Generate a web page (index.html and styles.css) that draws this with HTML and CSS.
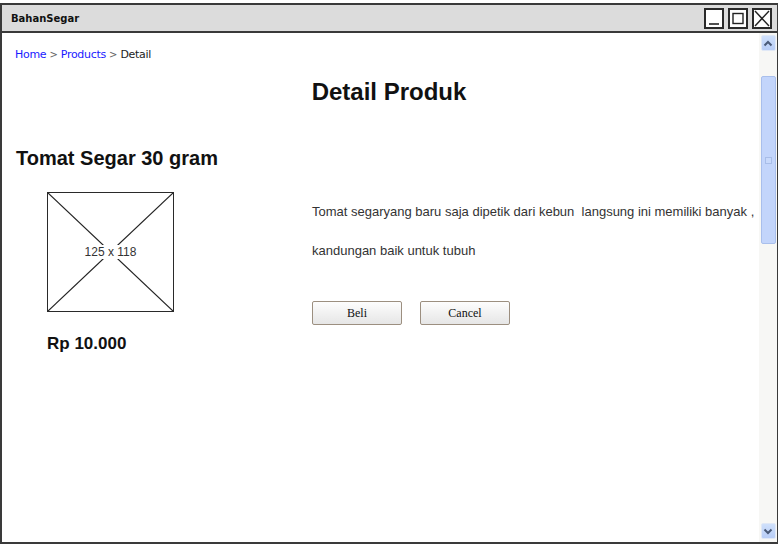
FILE: index.html
```html
<!DOCTYPE html>
<html>
<head>
<meta charset="utf-8">
<link rel="stylesheet" href="styles.css">
</head>
<body>
<div class="window">
  <div class="titlebar">
    <span class="title">BahanSegar</span>
    <div class="controls">
      <span class="ctl"><svg width="16" height="17" viewBox="0 0 16 17"><line x1="3" y1="14" x2="13" y2="14" stroke="#222" stroke-width="1.6"/></svg></span>
      <span class="ctl"><svg width="16" height="17" viewBox="0 0 16 17"><rect x="3" y="3.5" width="10" height="10" fill="none" stroke="#222" stroke-width="1.4"/></svg></span>
      <span class="ctl"><svg width="16" height="17" viewBox="0 0 16 17"><line x1="1" y1="1" x2="15" y2="16" stroke="#222" stroke-width="1.4"/><line x1="15" y1="1" x2="1" y2="16" stroke="#222" stroke-width="1.4"/></svg></span>
    </div>
  </div>
  <div class="body">
    <div class="content">
      <nav class="crumbs"><a>Home</a> <span class="sep">&gt;</span> <a>Products</a> <span class="sep">&gt;</span> <span class="cur">Detail</span></nav>
      <h1 class="page-title">Detail Produk</h1>
      <h2 class="product-name">Tomat Segar 30 gram</h2>
      <div class="detail">
        <div class="left">
          <div class="placeholder">
            <svg class="cross" width="125" height="118" viewBox="0 0 125 118" preserveAspectRatio="none"><line x1="0" y1="0" x2="125" y2="118" stroke="#222" stroke-width="1.2"/><line x1="125" y1="0" x2="0" y2="118" stroke="#222" stroke-width="1.2"/></svg>
            <span class="dim">125 x 118</span>
          </div>
          <div class="price">Rp 10.000</div>
        </div>
        <div class="right">
          <p class="desc">Tomat segaryang baru saja dipetik dari kebun&nbsp; langsung ini memiliki banyak ,</p>
          <p class="desc">kandungan baik untuk tubuh</p>
          <div class="buttons">
            <button class="btn">Beli</button>
            <button class="btn">Cancel</button>
          </div>
        </div>
      </div>
    </div>
    <div class="scrollbar">
      <div class="sb-btn"><svg width="10" height="7" viewBox="0 0 10 7"><polyline points="1.5,5.5 5,2 8.5,5.5" fill="none" stroke="#4a5a78" stroke-width="2"/></svg></div>
      <div class="sb-track">
        <div class="sb-thumb"><span class="grip"></span></div>
      </div>
      <div class="sb-btn"><svg width="10" height="7" viewBox="0 0 10 7"><polyline points="1.5,1.5 5,5 8.5,1.5" fill="none" stroke="#4a5a78" stroke-width="2"/></svg></div>
    </div>
  </div>
</div>
</body>
</html>
```
FILE: styles.css
```css
* { box-sizing: border-box; }
html, body { margin: 0; padding: 0; background: #fff; }
body { width: 778px; height: 545px; overflow: hidden; }

.window {
  margin-top: 3px;
  width: 778px;
  height: 541px;
  border: 2px solid #3a3a3a;
  border-right-width: 1px;
  display: flex;
  flex-direction: column;
  background: #fff;
}

.titlebar {
  height: 28px;
  flex: none;
  background: #dcdcdc;
  border-bottom: 2px solid #3a3a3a;
  display: flex;
  align-items: center;
  justify-content: space-between;
  padding-left: 9px;
  padding-right: 5px;
}
.title {
  font-family: "DejaVu Sans", sans-serif;
  font-weight: bold;
  font-size: 10px;
  color: #111;
}
.controls { display: flex; gap: 4px; align-items: center; }
.ctl {
  width: 20px;
  height: 21px;
  border: 2px solid #2a2a2a;
  background: #fff;
  display: flex;
  align-items: center;
  justify-content: center;
}
.ctl svg { display: block; }

.body {
  flex: 1;
  display: flex;
  min-height: 0;
}
.content {
  flex: 1;
  padding: 14px 0 0 13px;
  font-family: "Liberation Sans", Arial, sans-serif;
}

.crumbs {
  font-family: "DejaVu Sans", sans-serif;
  font-size: 11px;
  line-height: 16px;
  color: #222;
  letter-spacing: -0.3px;
}
.crumbs a { color: #1a1aff; }
.crumbs .sep { color: #666; font-size: 10px; }

.page-title {
  margin: 15px 0 0 0;
  padding-left: 4px;
  text-align: center;
  font-size: 24px;
  line-height: 28px;
  font-weight: bold;
  color: #111;
}
.product-name {
  margin: 40px 0 0 1px;
  font-size: 20px;
  line-height: 24px;
  font-weight: bold;
  color: #111;
}

.detail {
  display: flex;
  margin-top: 22px;
}
.left {
  width: 297px;
  flex: none;
  padding-left: 32px;
}
.placeholder {
  position: relative;
  width: 127px;
  height: 120px;
  border: 1.5px solid #2a2a2a;
  display: flex;
  align-items: center;
  justify-content: center;
}
.cross { position: absolute; left: 0; top: 0; width: 100%; height: 100%; }
.dim {
  position: relative;
  background: #fff;
  font-size: 12px;
  color: #333;
  padding: 0 1px;
  line-height: 14px;
}
.price {
  margin-top: 22px;
  font-size: 17px;
  font-weight: bold;
  color: #111;
  line-height: 20px;
}

.right { padding-top: 11px; }
.desc {
  margin: 0 0 21px 0;
  font-size: 13px;
  line-height: 18px;
  color: #333;
  white-space: nowrap;
}
.buttons { display: flex; gap: 18px; margin-top: 41px; }
.btn {
  width: 90px;
  height: 24px;
  border: 1px solid #9c8f80;
  border-radius: 2px;
  background: linear-gradient(#fdfdfd, #e6e6e6);
  font-family: "Liberation Serif", "Times New Roman", serif;
  font-size: 12px;
  color: #111;
  padding: 0;
}

.scrollbar {
  width: 18px;
  flex: none;
  background: #f7f7f5;
  display: flex;
  flex-direction: column;
  align-items: center;
  padding: 2px 0 3px 0;
}
.sb-btn {
  width: 15px;
  height: 16px;
  flex: none;
  background: linear-gradient(#cfe0fb, #b8cdf6);
  border: 1px solid #e0e8f6;
  border-radius: 2px;
  display: flex;
  align-items: center;
  justify-content: center;
}
.sb-track { flex: 1; width: 100%; padding-top: 25px; display: flex; justify-content: center; }
.sb-thumb {
  width: 15px;
  height: 168px;
  background: #c3d5fb;
  border: 1px solid #a9bfec;
  border-radius: 2px;
  display: flex;
  align-items: center;
  justify-content: center;
}
.grip { width: 7px; height: 7px; border: 1px solid #a8bde8; background: #c8d9fb; }
```
